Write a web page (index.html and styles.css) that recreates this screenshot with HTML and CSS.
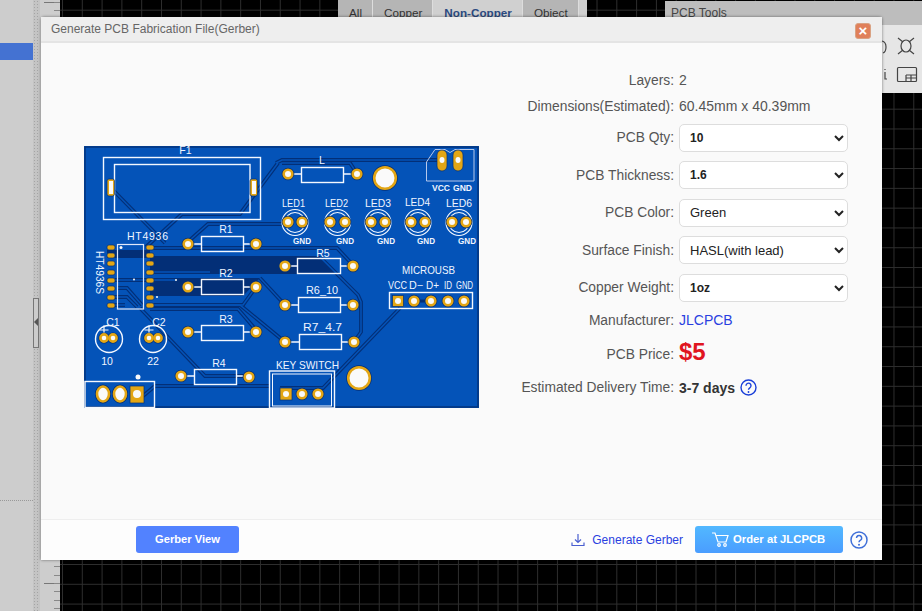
FILE: index.html
```html
<!DOCTYPE html>
<html lang="en">
<head>
    <meta charset="UTF-8">
    <title>Generate PCB Fabrication File(Gerber)</title>
    <link rel="stylesheet" href="styles.css">
</head>
<body>
    <div id="app">
        <div class="side-panel"><div class="side-active"></div><div class="side-line"></div></div>
        <div class="splitter"><div class="splitter-grip"></div></div>
        <div class="ruler"></div>
        <div class="canvas">
            <div class="filter-tabs">
                <span class="tab">All</span>
                <span class="tab">Copper</span>
                <span class="tab tab-on">Non-Copper</span>
                <span class="tab">Object</span>
            </div>
            <div class="tools">
                <div class="tools-title">PCB Tools</div>
                <div class="tools-body">
                    <svg width="40" height="60" viewBox="0 0 40 60" fill="none" stroke="#444" stroke-width="1.2">
                        <path d="M0 8q4 1 4 6t-3 6"/>
                        <path d="M3 36v1M3 39v7h2"/>
                        <ellipse cx="24" cy="13" rx="5" ry="6"/>
                        <path d="M16 5l5 4M32 5l-5 4M16 21l5-4M32 21l-5-4"/>
                        <rect x="15.500" y="34.500" width="19" height="14" rx="1"/>
                        <path d="M24 42h10M24 45h10M24 42v6M29 42v6"/>
                    </svg>
                </div>
            </div>
        </div>

        <!-- gerber dialog -->
        <div class="dialog">
            <div class="dialog-title">
                <span>Generate PCB Fabrication File(Gerber)</span>
                <button class="close-btn">×</button>
            </div>
            <div class="dialog-body">
                <div class="board-wrap">
                    <svg class="board" width="395" height="262" viewBox="84 146 395 262">
                        <defs>
                            <g id="tracks" fill="none">
                                <path d="M113 190L165 243"/>
                                <path d="M146 247L182 214H240L278 163"/>
                                <path d="M190 240L208 224H282"/>
                                <path d="M276 163L282 160H440"/>
                                <path d="M282 163H350L356 172"/>
                                <path d="M150 248H337L353 265"/>
                                <path d="M320 257L358 295L361 302V332L354 342"/>
                                <path d="M150 305H243L256 287"/>
                                <path d="M150 305H240L285 342"/>
                                <path d="M150 309H238L256 330"/>
                                <path d="M260 278L285 305"/>
                                <path d="M140 308L205 376H248"/>
                                <path d="M143 396L155 386H270"/>
                                <path d="M280 388H323L400 308"/>
                                <path d="M115 280H176"/>
                                <path d="M117 288H127L142 305"/>
                                <path d="M110 297H127L137 307"/>
                                <path d="M110 305H125"/>
                                <path d="M150 272H210"/>
                            </g>
                            <g id="pads">
                                <circle cx="288" cy="174" r="4.300"/><circle cx="357" cy="174" r="4.300"/>
                                <circle cx="288" cy="222" r="4.300"/><circle cx="302" cy="222" r="4.300"/>
                                <circle cx="330" cy="222" r="4.300"/><circle cx="345" cy="222" r="4.300"/>
                                <circle cx="371" cy="222" r="4.300"/><circle cx="385" cy="222" r="4.300"/>
                                <circle cx="411" cy="222" r="4.300"/><circle cx="425" cy="222" r="4.300"/>
                                <circle cx="452" cy="222" r="4.300"/><circle cx="466" cy="222" r="4.300"/>
                                <circle cx="188" cy="244" r="4.300"/><circle cx="256" cy="244" r="4.300"/>
                                <circle cx="188" cy="287" r="4.300"/><circle cx="256" cy="287" r="4.300"/>
                                <circle cx="188" cy="332" r="4.300"/><circle cx="256" cy="332" r="4.300"/>
                                <circle cx="181" cy="376" r="4.300"/><circle cx="249" cy="377" r="4.300"/>
                                <circle cx="285" cy="266" r="4.300"/><circle cx="353" cy="266" r="4.300"/>
                                <circle cx="285" cy="305" r="4.300"/><circle cx="353" cy="305" r="4.300"/>
                                <circle cx="285" cy="342" r="4.300"/><circle cx="354" cy="342" r="4.300"/>
                                <circle cx="104" cy="338" r="3.600"/><circle cx="113" cy="338" r="3.600"/>
                                <circle cx="149" cy="338" r="3.600"/><circle cx="158" cy="338" r="3.600"/>
                                <circle cx="414" cy="301" r="4.300"/><circle cx="431" cy="301" r="4.300"/>
                                <circle cx="448" cy="301" r="4.300"/><circle cx="464" cy="301" r="4.300"/>
                                <circle cx="302" cy="394" r="4.300"/><circle cx="318" cy="394" r="4.300"/>
                                <ellipse cx="103" cy="394" rx="6" ry="7.500"/><ellipse cx="120" cy="394" rx="6" ry="7.500"/>
                                <circle cx="385" cy="178" r="10.800"/><circle cx="359" cy="378" r="10.800"/>
                            </g>
                        </defs>

                        <rect x="84" y="146" width="395" height="262" fill="#0453b8"/>
                        <path d="M85 147H478V407H85Z" fill="none" stroke="#03357c" stroke-width="1.500"/>

                        <!-- dark fill between the IC and resistors -->
                        <path d="M107 250H150V258H107ZM150 256H320L338 274H150Z" fill="#032f77"/>
                        <path d="M150 278H260L243 296H150Z" fill="#032f77"/>

                        <!-- tracks -->
                        <use href="#tracks" stroke="#032f77" stroke-width="3.800"/>
                        <use href="#tracks" stroke="#0453b8" stroke-width="1.500"/>
                        <path d="M414 301H431" stroke="#032f77" stroke-width="3"/>

                        <!-- silk outlines -->
                        <g fill="none" stroke="#f4f8ff" stroke-width="1.400">
                            <rect x="103.500" y="157.500" width="157" height="62"/>
                            <rect x="114.500" y="164.500" width="135.500" height="48"/>
                            <rect x="301.500" y="167.500" width="42" height="15"/>
                            <rect x="201.500" y="236.500" width="42" height="15"/>
                            <rect x="201.500" y="279.500" width="42" height="15"/>
                            <rect x="201.500" y="325.500" width="42" height="15"/>
                            <rect x="194.500" y="369.500" width="42" height="15"/>
                            <rect x="297.500" y="258.500" width="43" height="15"/>
                            <rect x="298.500" y="297.500" width="42" height="15"/>
                            <rect x="299.500" y="334.500" width="42" height="15"/>
                            <rect x="117.500" y="244.500" width="26" height="64.500" stroke="#dfe8fa" stroke-width="1.200"/>
                            <rect x="389.500" y="292.500" width="83" height="16"/>
                            <rect x="85" y="381.500" width="69.500" height="26"/>
                            <rect x="269.500" y="371" width="65" height="37"/>
                            <rect x="272.500" y="374" width="59" height="32" stroke-width="1"/>
                            <path d="M426.500 162L435 149.500H445L450 152.500L455 149.500H474V181H426.500Z" stroke="#b5c8ec" stroke-width="1"/>
                            <circle cx="109" cy="339" r="13.500"/>
                            <circle cx="153" cy="339" r="13.500"/>
                            <path d="M194 244H201M244 244H251M194 287H201M244 287H251M194 332H201M244 332H251M187 376H194M237 376H244M294 174H301M344 174H351M291 266H297M341 266H347M291 305H298M341 305H348M291 342H299M342 342H348"/>
                            <path d="M99.500 330H108.500M104 325.500V334.500M144.500 330H153.500M149 325.500V334.500" stroke-width="1.200"/>
                        </g>

                        <!-- LED rings -->
                        <g fill="none" stroke="#f4f8ff" stroke-width="1.100">
                            <circle cx="295" cy="222.500" r="13"/><circle cx="295" cy="222.500" r="10"/>
                            <circle cx="337.500" cy="222.500" r="13"/><circle cx="337.500" cy="222.500" r="10"/>
                            <circle cx="378" cy="222.500" r="13"/><circle cx="378" cy="222.500" r="10"/>
                            <circle cx="418" cy="222.500" r="13"/><circle cx="418" cy="222.500" r="10"/>
                            <circle cx="459" cy="222.500" r="13"/><circle cx="459" cy="222.500" r="10"/>
                        </g>

                        <!-- pads -->
                        <use href="#pads" fill="none" stroke="#032f77" stroke-width="4"/>
                        <use href="#pads" fill="#fafafa" stroke="#e3a615" stroke-width="2.600"/>
                        <g fill="#e3a615" stroke="#032f77" stroke-width="0.700">
                            <rect x="130" y="386" width="14" height="17"/>
                            <rect x="392.500" y="295.500" width="11" height="11"/>
                            <rect x="280" y="388" width="12" height="12"/>
                            <rect x="437" y="150" width="10" height="21" rx="5"/>
                            <rect x="453" y="150" width="10" height="21" rx="5"/>
                            <rect x="107" y="179" width="7.500" height="17" rx="2"/>
                            <rect x="250" y="179" width="7.500" height="17" rx="2"/>
                            <rect x="107" y="245" width="8" height="5" rx="2"/>
                            <rect x="107" y="253" width="8" height="5" rx="2"/>
                            <rect x="107" y="261" width="8" height="5" rx="2"/>
                            <rect x="107" y="270" width="8" height="5" rx="2"/>
                            <rect x="107" y="278" width="8" height="5" rx="2"/>
                            <rect x="107" y="286" width="8" height="5" rx="2"/>
                            <rect x="107" y="295" width="8" height="5" rx="2"/>
                            <rect x="107" y="303" width="8" height="5" rx="2"/>
                            <rect x="146" y="245" width="8" height="5" rx="2"/>
                            <rect x="146" y="253" width="8" height="5" rx="2"/>
                            <rect x="146" y="261" width="8" height="5" rx="2"/>
                            <rect x="146" y="270" width="8" height="5" rx="2"/>
                            <rect x="146" y="278" width="8" height="5" rx="2"/>
                            <rect x="146" y="286" width="8" height="5" rx="2"/>
                            <rect x="146" y="295" width="8" height="5" rx="2"/>
                            <rect x="146" y="303" width="8" height="5" rx="2"/>
                        </g>
                        <g fill="#fafafa">
                            <rect x="109" y="181" width="4" height="13"/>
                            <rect x="252" y="181" width="4" height="13"/>
                            <ellipse cx="442" cy="160" rx="2.500" ry="3"/>
                            <ellipse cx="458" cy="160" rx="2.500" ry="3"/>
                            <circle cx="137" cy="394" r="4"/>
                            <circle cx="398" cy="301" r="3"/>
                            <circle cx="286" cy="394" r="3"/>
                            <circle cx="138" cy="377" r="2.500"/>
                            <circle cx="121" cy="247.500" r="1.500"/>
                            <circle cx="134" cy="279.500" r="1"/>
                            <circle cx="176" cy="280" r="1"/>
                            <circle cx="157" cy="297" r="1"/>
                        </g>

                        <!-- silk text -->
                        <g class="silk">
                            <text x="185.500" y="153.500" text-anchor="middle">F1</text>
                            <text x="322" y="164" text-anchor="middle">L</text>
                            <text x="127" y="240" textLength="41">HT4936</text>
                            <text x="226" y="233" text-anchor="middle">R1</text>
                            <text x="226" y="277" text-anchor="middle">R2</text>
                            <text x="226" y="323" text-anchor="middle">R3</text>
                            <text x="219" y="367" text-anchor="middle">R4</text>
                            <text x="323" y="257" text-anchor="middle">R5</text>
                            <text x="306" y="294" textLength="32" lengthAdjust="spacingAndGlyphs">R6_10</text>
                            <text x="303" y="331" textLength="39" lengthAdjust="spacingAndGlyphs">R7_4.7</text>
                            <text x="282" y="207" textLength="23" lengthAdjust="spacingAndGlyphs">LED1</text>
                            <text x="325" y="207" textLength="23" lengthAdjust="spacingAndGlyphs">LED2</text>
                            <text x="365" y="207" textLength="26" lengthAdjust="spacingAndGlyphs">LED3</text>
                            <text x="405" y="206" textLength="25" lengthAdjust="spacingAndGlyphs">LED4</text>
                            <text x="446" y="207" textLength="26" lengthAdjust="spacingAndGlyphs">LED6</text>
                            <text x="113" y="326" text-anchor="middle">C1</text>
                            <text x="159" y="326" text-anchor="middle">C2</text>
                            <text x="107" y="365" text-anchor="middle">10</text>
                            <text x="153" y="365" text-anchor="middle">22</text>
                            <text x="276" y="369" textLength="63" lengthAdjust="spacingAndGlyphs">KEY SWITCH</text>
                            <text x="402" y="274" textLength="53" lengthAdjust="spacingAndGlyphs">MICROUSB</text>
                            <text class="silk-bold" x="432" y="191" textLength="18" lengthAdjust="spacingAndGlyphs">VCC</text>
                            <text class="silk-bold" x="453" y="191" textLength="19" lengthAdjust="spacingAndGlyphs">GND</text>
                            <text class="silk-bold" x="293" y="243.500" textLength="18" lengthAdjust="spacingAndGlyphs">GND</text>
                            <text class="silk-bold" x="336" y="243.500" textLength="18" lengthAdjust="spacingAndGlyphs">GND</text>
                            <text class="silk-bold" x="377" y="243.500" textLength="18" lengthAdjust="spacingAndGlyphs">GND</text>
                            <text class="silk-bold" x="417" y="243.500" textLength="18" lengthAdjust="spacingAndGlyphs">GND</text>
                            <text class="silk-bold" x="458" y="243.500" textLength="18" lengthAdjust="spacingAndGlyphs">GND</text>
                            <text x="388" y="289" textLength="19" lengthAdjust="spacingAndGlyphs">VCC</text>
                            <text x="409" y="289" textLength="14" lengthAdjust="spacingAndGlyphs">D−</text>
                            <text x="426" y="289" textLength="13" lengthAdjust="spacingAndGlyphs">D+</text>
                            <text x="444" y="289" textLength="8" lengthAdjust="spacingAndGlyphs">ID</text>
                            <text x="456" y="289" textLength="17" lengthAdjust="spacingAndGlyphs">GND</text>
                            <text transform="translate(96 251) rotate(90)" textLength="43" lengthAdjust="spacingAndGlyphs">HT4936S</text>
                        </g>
                    </svg>
                </div>

                <div class="info">
                    <div class="row row-text"><label>Layers:</label><span>2</span></div>
                    <div class="row row-text"><label>Dimensions(Estimated):</label><span>60.45mm x 40.39mm</span></div>
                    <div class="row row-select"><label>PCB Qty:</label><select class="bold"><option>10</option></select></div>
                    <div class="row row-select"><label>PCB Thickness:</label><select class="bold"><option>1.6</option></select></div>
                    <div class="row row-select"><label>PCB Color:</label><select><option>Green</option></select></div>
                    <div class="row row-select"><label>Surface Finish:</label><select><option>HASL(with lead)</option></select></div>
                    <div class="row row-select"><label>Copper Weight:</label><select class="bold"><option>1oz</option></select></div>
                    <div class="row row-text"><label>Manufacturer:</label><a class="maker">JLCPCB</a></div>
                    <div class="row row-price"><label>PCB Price:</label><span class="price">$5</span></div>
                    <div class="row row-delivery"><label>Estimated Delivery Time:</label><b>3-7 days</b>
                        <svg width="17" height="17" viewBox="0 0 17 17"><circle cx="8.500" cy="8.500" r="7.500" fill="none" stroke="#1a3fd8" stroke-width="1.400"/><path d="M6 6.700a2.500 2.500 0 1 1 3.800 2.100c-.9.600-1.300 1-1.300 2" fill="none" stroke="#1a3fd8" stroke-width="1.400"/><circle cx="8.500" cy="13" r=".9" fill="#1a3fd8"/></svg>
                    </div>
                </div>
            </div>
            <div class="dialog-foot">
                <button class="btn-view">Gerber View</button>
                <a class="gen-link">
                    <svg width="14" height="14" viewBox="0 0 14 14" fill="none" stroke="#4a5fd0" stroke-width="1.200"><path d="M7 1v8M4 6.500L7 9.500L10 6.500M1 9.500V12.500H13V9.500"/></svg>
                    Generate Gerber
                </a>
                <button class="btn-order">
                    <svg width="17" height="15" viewBox="0 0 17 15" fill="none" stroke="#fff" stroke-width="1.200"><path d="M0 1H3L6 10H14L16 3.500H4"/><circle cx="7" cy="13" r="1.300"/><circle cx="13" cy="13" r="1.300"/></svg>
                    Order at JLCPCB
                </button>
                <svg class="help-big" width="18" height="18" viewBox="0 0 18 18"><circle cx="9" cy="9" r="8" fill="none" stroke="#3f6fd8" stroke-width="1.500"/><path d="M6.500 7a2.600 2.600 0 1 1 4 2.200c-1 .6-1.500 1-1.500 2.100" fill="none" stroke="#3f6fd8" stroke-width="1.500"/><circle cx="9" cy="13.800" r="1" fill="#3f6fd8"/></svg>
            </div>
        </div>
    </div>
</body>
</html>
```

FILE: styles.css
```css
html, body {
    margin: 0;
    padding: 0;
    height: 100%;
    overflow: hidden;
    font-family: "Liberation Sans", Arial, sans-serif;
}
#app {
    position: relative;
    display: flex;
    width: 922px;
    height: 611px;
    overflow: hidden;
}
.side-panel {
    width: 33px;
    background: #cdcdcd;
    padding-top: 43px;
    box-sizing: border-box;
}
.side-active {
    height: 17px;
    background: #4472d2;
}
.side-line {
    height: 1px;
    margin-top: 440px;
    border-top: 1px dotted #999;
}
.splitter {
    position: relative;
    width: 7px;
    background-color: #c4c4c4;
    background-image: radial-gradient(#a4a4a4 .8px, transparent .9px);
    background-size: 3px 3px;
    padding-top: 298px;
    box-sizing: border-box;
}
.splitter-grip {
    position: relative;
    height: 48px;
    width: 4px;
    border: 1px solid #777;
    background: #ccc;
}
.splitter-grip::after {
    content: "";
    position: absolute;
    left: 0;
    top: 19px;
    border: 4px solid transparent;
    border-left: 0;
    border-right: 4px solid #555;
}
.ruler {
    width: 20px;
    background-color: #cdcdcd;
    background-image: repeating-linear-gradient(#888 0 1px, transparent 1px 8.3px), repeating-linear-gradient(#777 0 1px, transparent 1px 41.500px);
    background-size: 6px 100%, 16px 100%;
    background-position: right 0 top 2px, right 0 top 2px;
    background-repeat: no-repeat;
}
.canvas {
    position: relative;
    flex: 1;
    background-color: #000;
    background-image: linear-gradient(#2e2e2e 1px, transparent 1px), linear-gradient(90deg, #2e2e2e 1px, transparent 1px);
    background-size: 19.800px 19.800px;
    background-position: 2px 9.700px;
}
.filter-tabs {
    position: absolute;
    left: 278px;
    top: 0;
    display: flex;
    height: 20px;
    padding-right: 8px;
    font-size: 11.700px;
    color: #333;
    background: #cfcfcf;
}
.tab {
    padding: 6px 11px 0;
    background: #b5b5b5;
    box-shadow: inset -1px 0 #ddd;
}
.tab-on {
    background: #d0d0d0;
    color: #2b4a80;
    font-weight: 700;
}
.tools {
    position: absolute;
    left: 605px;
    top: 1px;
    width: 257px;
    height: 92px;
    background: #e6e6e6;
    border-radius: 3px 0 0 0;
}
.tools-title {
    height: 24px;
    line-height: 25px;
    padding-left: 6px;
    font-size: 12px;
    color: #444;
    background: #bdbdbd;
}
.tools-body {
    display: flex;
    justify-content: flex-end;
    padding-top: 8px;
}
.dialog {
    position: absolute;
    left: 41px;
    top: 17px;
    width: 841px;
    height: 543px;
    display: flex;
    flex-direction: column;
    background: #fafafa;
    box-shadow: 0 0 3px rgba(0, 0, 0, .5);
    border-radius: 3px 3px 0 0;
}
.dialog-title {
    height: 24px;
    display: flex;
    align-items: center;
    justify-content: space-between;
    padding: 0 10px;
    font-size: 12px;
    color: #666;
    background: #eee;
    border-bottom: 2px solid #e4e4e4;
}
.close-btn {
    width: 16px;
    height: 16px;
    margin: 3px 1px 0 0;
    padding: 0;
    border: 1px solid #d9a283;
    border-radius: 3px;
    background: #e0805a;
    color: #fff;
    font: 700 15px/12px "Liberation Sans", sans-serif;
}
.dialog-body {
    flex: 1;
    display: flex;
    min-height: 0;
}
.board-wrap {
    width: 437px;
    padding: 103px 0 0 43px;
    box-sizing: border-box;
}
.board {
    display: block;
    overflow: visible;
}
.silk text {
    fill: #f0f5ff;
    font-family: "Liberation Sans", sans-serif;
    font-size: 10.500px;
}
.silk .silk-bold {
    font-size: 9.500px;
    font-weight: 700;
}
.info {
    padding-top: 24px;
    font-size: 14px;
    color: #555;
}
.row {
    display: flex;
    align-items: center;
    gap: 5px;
}
.row label {
    width: 196px;
    text-align: right;
    font-size: 13.800px;
}
.row-text {
    height: 26px;
}
.row-text:nth-child(8) {
    height: 27px;
}
.row-select {
    height: 37.500px;
}
.row-select select {
    width: 169px;
    height: 28px;
    padding-left: 6px;
    font: 13px "Liberation Sans", sans-serif;
    color: #222;
    background: #fff;
    border: 1px solid #ddd;
    border-radius: 5px;
}
select.bold {
    font-size: 12px;
    font-weight: 700;
}
.maker {
    color: #2a3fe0;
}
.row-price {
    height: 36px;
    align-items: flex-end;
}
.row-price label {
    line-height: 30px;
}
.price {
    font-size: 24px;
    font-weight: 700;
    line-height: 36px;
    color: #e0151f;
}
.row-delivery {
    height: 36px;
}
.row-delivery b {
    color: #333;
}
.dialog-foot {
    height: 41px;
    box-sizing: border-box;
    display: flex;
    align-items: center;
    padding: 0 14px 0 95px;
    background: #fdfdfd;
    border-top: 1px solid #eee;
}
.btn-view {
    width: 103px;
    height: 27px;
    margin-bottom: 2px;
    border: 0;
    border-radius: 3px;
    background: #5282ff;
    color: #fff;
    font: 700 11.200px "Liberation Sans", sans-serif;
}
.gen-link {
    display: flex;
    align-items: center;
    gap: 7px;
    margin-left: auto;
    font-size: 12px;
    color: #2a3fe0;
}
.btn-order {
    display: flex;
    align-items: center;
    gap: 4px;
    width: 148px;
    height: 27px;
    margin-left: 12px;
    margin-bottom: 2px;
    padding: 0 0 0 17px;
    border: 0;
    border-radius: 3px;
    background: linear-gradient(#52b8ff, #4a9dff);
    color: #fff;
    font: 700 11.300px "Liberation Sans", sans-serif;
}
.help-big {
    margin-left: 7px;
}
```
